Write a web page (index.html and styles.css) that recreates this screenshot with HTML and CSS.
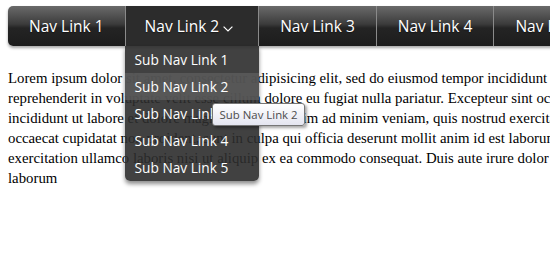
FILE: index.html
```html
<!DOCTYPE html>
<html lang="en">
<head>
    <meta charset="UTF-8">
    <meta name="viewport" content="width=device-width, initial-scale=1.0">
    <title>Dropdown Nav</title>
    <link rel="stylesheet" href="styles.css">
</head>
<body>
    <ul class="nav">
        <li class="nav-item"><a href="#">Nav Link 1</a></li>
        <li class="nav-item open">
            <a href="#">Nav Link 2
                <svg class="caret" width="10" height="6" viewBox="0 0 10 6"><path d="M0.6 0.6 L5 5 L9.4 0.6" fill="none" stroke="#fff" stroke-width="1.2"/></svg>
            </a>
            <ul class="sub">
                <li><a href="#">Sub Nav Link 1</a></li>
                <li class="hover"><a href="#">Sub Nav Link 2</a></li>
                <li><a href="#">Sub Nav Link 3</a></li>
                <li><a href="#">Sub Nav Link 4</a></li>
                <li><a href="#">Sub Nav Link 5</a></li>
            </ul>
            <div class="tooltip">Sub Nav Link 2</div>
        </li>
        <li class="nav-item"><a href="#">Nav Link 3</a></li>
        <li class="nav-item"><a href="#">Nav Link 4</a></li>
        <li class="nav-item"><a href="#">Nav Link 5</a></li>
        <li class="nav-item"><a href="#">Nav Link 6</a></li>
    </ul>

    <p class="content">
        Lorem ipsum dolor sit amet, consectetur adipisicing elit, sed do eiusmod tempor incididunt ut labore et dolore magna aliqua. Ut enim ad minim veniam, quis nostrud exercitation ullamco laboris nisi ut aliquip ex ea commodo consequat. Duis aute irure dolor in<br>
        reprehenderit in voluptate velit esse cillum dolore eu fugiat nulla pariatur. Excepteur sint occaecat cupidatat non proident, sunt in culpa qui officia deserunt mollit anim id est laborum. Lorem ipsum dolor sit amet, consectetur adipisicing elit, sed do eiusmod tempor<br>
        incididunt ut labore et dolore magna aliqua. Ut enim ad minim veniam, quis nostrud exercitation ullamco laboris nisi ut aliquip ex ea commodo consequat. Duis aute irure dolor in reprehenderit in voluptate velit esse cillum dolore eu fugiat nulla pariatur. Excepteur sint<br>
        occaecat cupidatat non proident, sunt in culpa qui officia deserunt mollit anim id est laborum. Lorem ipsum dolor sit amet, consectetur adipisicing elit, sed do eiusmod tempor incididunt ut labore et dolore magna aliqua. Ut enim ad minim veniam, quis nostrud<br>
        exercitation ullamco laboris nisi ut aliquip ex ea commodo consequat. Duis aute irure dolor in reprehenderit in voluptate velit esse cillum dolore eu fugiat nulla pariatur. Excepteur sint occaecat cupidatat non proident, sunt in culpa qui officia deserunt mollit anim id est<br>
        laborum
    </p>
</body>
</html>
```

FILE: styles.css
```css
html, body {
    overflow: hidden;
}
body {
    margin: 0;
    padding: 6px 8px;
    background: #fff;
}
.nav {
    display: flex;
    width: 900px;
    margin: 0;
    padding: 0;
    list-style: none;
    height: 40px;
    border-radius: 5px 0 0 5px;
    background: linear-gradient(#6a6a6a 0%, #3c3c3c 45%, #242424 55%, #1c1c1c 100%);
    box-shadow: 0 2px 3px rgba(0, 0, 0, 0.35);
    font-family: "Open Sans", sans-serif;
}
.nav-item {
    position: relative;
    flex: none;
    border-left: 1px solid #8a8a8a;
}
.nav-item:first-child {
    border-left: none;
}
.nav-item > a {
    display: flex;
    align-items: center;
    height: 40px;
    padding: 0 21px 0 21px;
    color: #fff;
    font-size: 15.5px;
    text-decoration: none;
    text-shadow: 0 1px 1px rgba(0, 0, 0, 0.4);
}
.nav-item:nth-child(3) > a,
.nav-item:nth-child(4) > a {
    padding-left: 21px;
}
.nav-item.open > a {
    background: #2c2c2c;
    padding: 0 25px 0 19px;
}
.caret {
    margin: 5px 0 0 4px;
}
.sub {
    position: absolute;
    top: 40px;
    left: -1px;
    width: 134px;
    margin: 0;
    padding: 0;
    list-style: none;
    background: rgba(44, 44, 44, 0.9);
    border-radius: 0 0 5px 5px;
    box-shadow: 0 3px 4px rgba(0, 0, 0, 0.45);
    z-index: 2;
}
.sub a {
    display: block;
    height: 27px;
    line-height: 27px;
    padding-left: 10px;
    color: #fff;
    font-size: 13.7px;
    text-decoration: none;
}
.sub .hover a {
    background: rgba(95, 95, 95, 0.75);
}
.tooltip {
    position: absolute;
    top: 97px;
    left: 86px;
    z-index: 3;
    padding: 3px 6px 3px 7px;
    border: 1px solid #767676;
    border-radius: 3px;
    background: linear-gradient(#fff, #e4e5f0);
    box-shadow: 2px 2px 3px rgba(0, 0, 0, 0.35);
    color: #4c4c4c;
    font-family: "Open Sans", sans-serif;
    font-size: 11.4px;
    white-space: nowrap;
}
.content {
    margin: 22px 0 0 0;
    font-family: "Liberation Serif", serif;
    font-size: 14.8px;
    line-height: 20px;
    white-space: nowrap;
    color: #000;
}
```
